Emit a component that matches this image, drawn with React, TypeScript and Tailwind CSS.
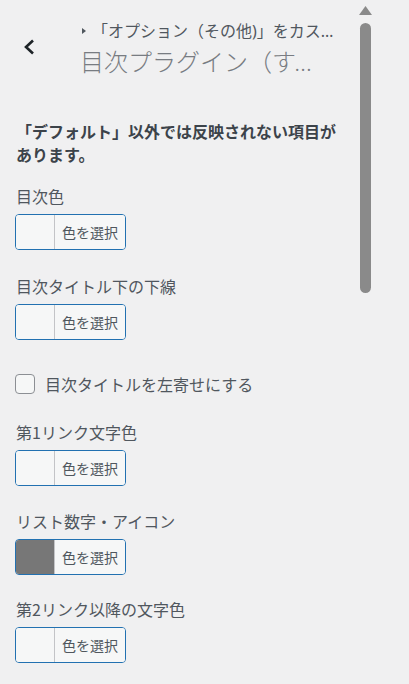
import React from 'react';

const font = { fontFamily: '"Noto Sans CJK JP", "Noto Sans", sans-serif' };
const headFont = { fontFamily: '"Noto Sans", "Noto Sans CJK JP", sans-serif' };

function ColorButton({ color }: { color?: string }) {
    return (
        <button
            type="button"
            className="flex h-[36px] w-[111px] overflow-hidden rounded-[4px] border border-[#2271b1] bg-[#f6f7f7] p-0"
        >
            <span className={`h-full w-[38px] shrink-0 ${color ?? 'bg-[#f6f7f7]'}`} />
            <span className="flex h-full flex-1 items-center justify-center border-l border-[#c3c4c7] bg-[#f6f7f7] text-[14px] leading-none text-[#50575e]">
                色を選択
            </span>
        </button>
    );
}

function Field({ label, color, className }: { label: string; color?: string; className?: string }) {
    return (
        <div className={className}>
            <div className="text-[16px] leading-[24px] text-[#50575e]">{label}</div>
            <div className="mt-[6px] -ml-px">
                <ColorButton color={color} />
            </div>
        </div>
    );
}

export default function App() {
    return (
        <div className="flex h-[684px] w-[409px] overflow-hidden bg-[#f0f0f1]" style={font}>
            <div className="w-[352px] shrink-0">
                {/* header */}
                <div className="flex h-[90px]">
                    <div className="flex w-[80px] shrink-0 items-start pt-[39px] pl-[23px]">
                        <svg width="12" height="16" viewBox="0 0 12 16">
                            <polyline points="10,1.5 3,8 10,14.5" fill="none" stroke="#1d2327" strokeWidth="2.6" />
                        </svg>
                    </div>
                    <div className="min-w-0 flex-1 pt-[21px] pr-[12px]" style={headFont}>
                        <div className="flex items-center text-[16px] leading-[20px] text-[#50575e]">
                            <svg width="12" height="8" viewBox="0 0 12 8" className="shrink-0">
                                <polygon points="2,1 6,4 2,7" fill="#50575e" />
                            </svg>
                            <span className="truncate">「オプション（その他)」をカスタマイズ中</span>
                        </div>
                        <div className="mt-[5px] w-[250px] truncate text-[24px] leading-[32px] font-light text-[#787c82]">
                            目次プラグイン（すべての設定）
                        </div>
                    </div>
                </div>

                {/* body */}
                <div className="pl-4 pr-2">
                    <p className="mt-[30px] text-[16px] leading-[23px] font-bold text-[#3c434a]">
                        「デフォルト」以外では反映されない項目があります。
                    </p>

                    <Field className="mt-[18px]" label="目次色" />
                    <Field className="mt-[24px]" label="目次タイトル下の下線" />

                    <label className="mt-[34px] -ml-px flex items-center gap-[10px] text-[16px] leading-[20px] text-[#50575e]">
                        <span className="h-[20px] w-[20px] shrink-0 rounded-[4px] border border-[#8c8f94] bg-[#f6f7f7]" />
                        目次タイトルを左寄せにする
                    </label>

                    <Field className="mt-[26px]" label="第1リンク文字色" />
                    <Field className="mt-[23px]" label="リスト数字・アイコン" color="bg-[#777777]" />
                    <Field className="mt-[22px]" label="第2リンク以降の文字色" />
                </div>
            </div>

            {/* scrollbar */}
            <div className="ml-[6px] flex w-[14px] flex-col items-center pt-[6px]">
                <svg width="13" height="9" viewBox="0 0 13 9">
                    <polygon points="6.5,0 13,9 0,9" fill="#8a8a8a" />
                </svg>
                <div className="mt-[8px] h-[270px] w-[11px] rounded-full bg-[#8a8a8a]" />
            </div>
        </div>
    );
}
